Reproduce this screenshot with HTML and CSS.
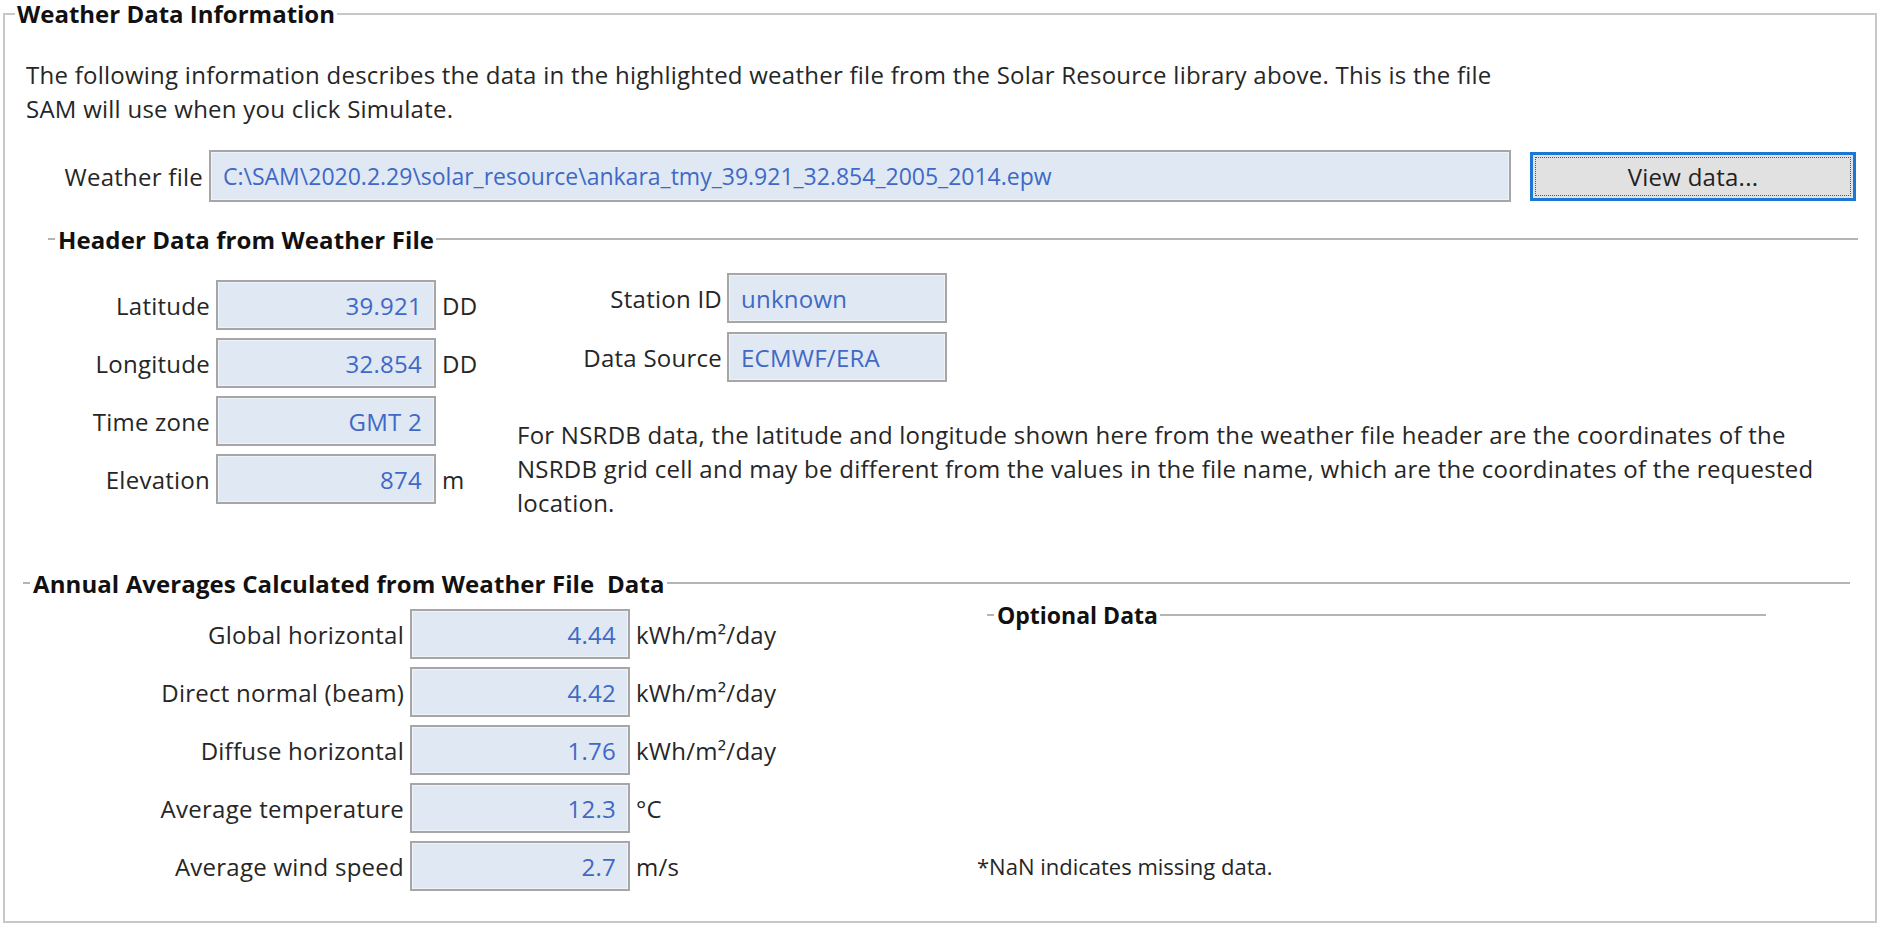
FILE: index.html
```html
<!DOCTYPE html>
<html>
<head>
<meta name="viewport" content="width=device-width, initial-scale=1">
<link rel="stylesheet" href="styles.css">
</head>
<body>

<fieldset class="frame">
  <legend>Weather Data Information</legend>

  <p class="intro">The following information describes the data in the highlighted weather file from the Solar Resource library above. This is the file<br>SAM will use when you click Simulate.</p>

  <div class="file-row">
    <div class="lbl">Weather file</div>
    <div class="box path">C:\SAM\2020.2.29\solar_resource\ankara_tmy_39.921_32.854_2005_2014.epw</div>
    <div class="btn"><span>View data...</span></div>
  </div>

  <div class="section-head header-head">Header Data from Weather File</div>

  <div class="header-body">
    <div class="grid loc-grid">
      <div class="lbl">Latitude</div>
      <div class="box num">39.921</div>
      <div class="unit">DD</div>

      <div class="lbl">Longitude</div>
      <div class="box num">32.854</div>
      <div class="unit">DD</div>

      <div class="lbl">Time zone</div>
      <div class="box num">GMT 2</div>
      <div class="unit"></div>

      <div class="lbl">Elevation</div>
      <div class="box num">874</div>
      <div class="unit">m</div>
    </div>

    <div class="station-col">
      <div class="grid station-grid">
        <div class="lbl">Station ID</div>
        <div class="box txt">unknown</div>

        <div class="lbl">Data Source</div>
        <div class="box txt">ECMWF/ERA</div>
      </div>
      <p class="note">For NSRDB data, the latitude and longitude shown here from the weather file header are the coordinates of the<br>NSRDB grid cell and may be different from the values in the file name, which are the coordinates of the requested<br>location.</p>
    </div>
  </div>

  <div class="section-head annual-head">Annual Averages Calculated from Weather File&nbsp; Data</div>

  <div class="annual-body">
    <div class="grid avg-grid">
      <div class="lbl">Global horizontal</div>
      <div class="box num">4.44</div>
      <div class="unit">kWh/m²/day</div>

      <div class="lbl">Direct normal (beam)</div>
      <div class="box num">4.42</div>
      <div class="unit">kWh/m²/day</div>

      <div class="lbl">Diffuse horizontal</div>
      <div class="box num">1.76</div>
      <div class="unit">kWh/m²/day</div>

      <div class="lbl">Average temperature</div>
      <div class="box num">12.3</div>
      <div class="unit">°C</div>

      <div class="lbl">Average wind speed</div>
      <div class="box num">2.7</div>
      <div class="unit">m/s</div>
    </div>

    <div class="optional-col">
      <div class="section-head optional-head">Optional Data</div>
      <div class="nan-note">*NaN indicates missing data.</div>
    </div>
  </div>
</fieldset>

</body>
</html>
```

FILE: styles.css
```css
* {
  box-sizing: border-box;
}

body {
  margin: 0;
  background: #fff;
  font-family: "Open Sans", "Noto Sans", sans-serif;
  font-size: 24px;
  letter-spacing: 0.25px;
  color: #262626;
}

.frame {
  margin: 0 3px;
  padding: 0;
  height: 923px;
  border: 2px solid #c8c8c8;
}

.frame legend {
  margin-left: 10px;
  padding: 0 2px;
  font-size: 24px;
  font-weight: 700;
  letter-spacing: 0;
  line-height: 28px;
  color: #111;
}

.intro {
  margin: 30px 0 0 21px;
  line-height: 34px;
}

.file-row {
  display: flex;
  align-items: center;
  margin-top: 24px;
}

.file-row .lbl {
  width: 198px;
  margin-right: 6px;
  text-align: right;
}

.box {
  display: flex;
  align-items: center;
  height: 50px;
  padding: 0 12px;
  background: #dfe8f3;
  border: 2px solid #a6a6a6;
  box-shadow: inset 0 0 0 1px #eef3f9;
  color: #4068c6;
  white-space: nowrap;
}

.box.num {
  justify-content: flex-end;
}

.path {
  width: 1302px;
  height: 52px;
  font-size: 23px;
  letter-spacing: 0;
}

.btn {
  display: flex;
  width: 326px;
  height: 49px;
  margin-left: 19px;
  padding: 2px;
  background: #e1e1e1;
  border: 3px solid #1a78d4;
  color: #222;
}

.btn span {
  flex: 1;
  display: flex;
  align-items: center;
  justify-content: center;
  border: 1px dotted #555;
}

.section-head {
  display: flex;
  align-items: center;
  height: 30px;
  font-size: 24px;
  font-weight: 700;
  letter-spacing: 0.1px;
  color: #111;
  white-space: nowrap;
}

.section-head::before {
  content: "";
  width: 7px;
  margin-right: 3px;
  border-top: 2px solid #b4b4b4;
}

.section-head::after {
  content: "";
  flex: 1;
  margin-left: 2px;
  border-top: 2px solid #b4b4b4;
}

.header-head {
  margin: 22px 17px 0 43px;
}

.header-body {
  display: flex;
  align-items: flex-start;
  margin-top: 19px;
}

.grid {
  display: grid;
  align-items: center;
}

.grid .lbl {
  text-align: right;
}

.loc-grid {
  grid-template-columns: 205px 220px 60px;
  grid-auto-rows: 50px;
  column-gap: 6px;
  row-gap: 8px;
  margin-top: 7px;
}

.station-col {
  margin-left: 15px;
}

.station-grid {
  grid-template-columns: 205px 220px;
  grid-auto-rows: 50px;
  column-gap: 5px;
  row-gap: 9px;
}

.note {
  margin: 36px 0 0 0;
  line-height: 34px;
}

.annual-head {
  margin: 48px 25px 0 18px;
}

.annual-body {
  display: flex;
  margin-top: 2px;
}

.avg-grid {
  grid-template-columns: 399px 220px 150px;
  grid-auto-rows: 50px;
  column-gap: 6px;
  row-gap: 8px;
  margin-top: 9px;
}

.optional-col {
  display: flex;
  flex-direction: column;
  justify-content: space-between;
  width: 779px;
  margin-left: 201px;
}

.optional-head {
  font-size: 23px;
  letter-spacing: 0;
}

.nan-note {
  margin-left: -10px;
  font-size: 22px;
  letter-spacing: 0;
  line-height: 50px;
}
```
